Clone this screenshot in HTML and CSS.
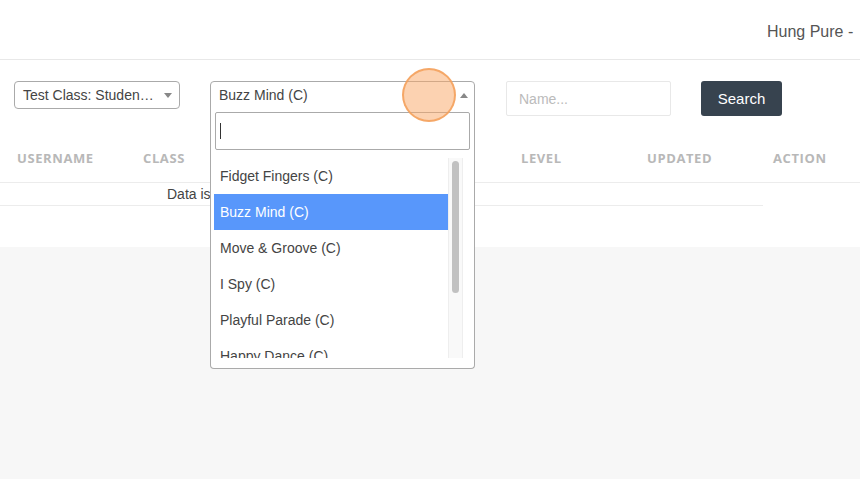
FILE: index.html
```html
<!DOCTYPE html>
<html lang="en">
<head>
  <meta charset="UTF-8" />
  <title>Students</title>
  <link rel="stylesheet" href="styles.css">
</head>
<body>
  <div class="topbar">
    <span class="user-name">Hung Pure -</span>
  </div>

  <div class="panel">
    <div class="filters">
      <div class="select">
        <span class="select-text">Test Class: Studen…</span>
        <span class="arrow-down"></span>
      </div>

      <div class="select-wrap">
        <div class="select open">
          <span class="select-text">Buzz Mind (C)</span>
          <span class="arrow-up"></span>
        </div>
        <div class="dropdown">
          <div class="dropdown-search"><span class="caret"></span></div>
          <div class="dropdown-list">
            <ul class="options">
              <li>Fidget Fingers (C)</li>
              <li class="active">Buzz Mind (C)</li>
              <li>Move &amp; Groove (C)</li>
              <li>I Spy (C)</li>
              <li>Playful Parade (C)</li>
              <li>Happy Dance (C)</li>
            </ul>
            <div class="scroll-track"><div class="scroll-thumb"></div></div>
          </div>
        </div>
        <div class="click-dot"></div>
      </div>

      <div class="name-input">Name...</div>
      <button class="search-btn">Search</button>
    </div>

    <div class="table-head">
      <div class="th">Username</div>
      <div class="th">Class</div>
      <div class="th">Game</div>
      <div class="th">Lessons</div>
      <div class="th">Level</div>
      <div class="th">Updated</div>
      <div class="th">Action</div>
    </div>
    <div class="table-row">Data is empty</div>
  </div>
</body>
</html>
```

FILE: styles.css
```css
html, body {
  margin: 0;
  padding: 0;
  height: 100%;
  background-color: #f7f7f7;
  font-family: 'Liberation Sans', Arial, sans-serif;
  color: #444;
  overflow: hidden;
}

.topbar {
  height: 59px;
  background: #fff;
  border-bottom: 1px solid #e8e8e8;
  display: flex;
  align-items: center;
  justify-content: flex-start;
  padding-left: 767px;
  white-space: nowrap;
  overflow: hidden;
}

.user-name {
  font-size: 16px;
  color: #555;
  margin-top: 4px;
}

.panel {
  background: #fff;
  height: 187px;
}

.filters {
  display: flex;
  align-items: flex-start;
  padding: 21px 0 0 14px;
}

.select {
  box-sizing: border-box;
  width: 166px;
  height: 28px;
  border: 1px solid #aaa;
  border-radius: 4px;
  display: flex;
  align-items: center;
  justify-content: space-between;
  padding: 0 8px;
  font-size: 14px;
  color: #444;
  margin-right: 30px;
  background: #fff;
}

.select-wrap {
  position: relative;
  margin-right: 31px;
}

.select-wrap .select {
  width: 265px;
  margin-right: 0;
}

.select.open {
  border-bottom-left-radius: 0;
  border-bottom-right-radius: 0;
}

.arrow-down {
  width: 0;
  height: 0;
  border-left: 4px solid transparent;
  border-right: 4px solid transparent;
  border-top: 5px solid #888;
  margin-right: -1px;
}

.arrow-up {
  width: 0;
  height: 0;
  border-left: 4px solid transparent;
  border-right: 4px solid transparent;
  border-bottom: 5px solid #888;
  margin-right: -2px;
}

/* open select2 panel */
.dropdown {
  position: absolute;
  top: 27px;
  left: 0;
  width: 265px;
  height: 261px;
  box-sizing: border-box;
  background: #fff;
  border: 1px solid #aaa;
  border-top: none;
  border-radius: 0 0 4px 4px;
  padding: 4px 4px 0 3px;
  z-index: 5;
}

.dropdown-search {
  box-sizing: border-box;
  height: 38px;
  margin-left: 1px;
  border: 1px solid #aaa;
  border-radius: 2px;
  display: flex;
  align-items: center;
  padding-left: 4px;
}

.caret {
  width: 1px;
  height: 16px;
  background: #333;
}

.dropdown-list {
  display: flex;
  margin-top: 8px;
  height: 200px;
  overflow: hidden;
}

.options {
  list-style: none;
  margin: 0;
  padding: 0;
  width: 234px;
}

.options li {
  height: 36px;
  line-height: 36px;
  padding-left: 6px;
  font-size: 14px;
  color: #444;
}

.options li.active {
  background: #5897fb;
  color: #fff;
}

.scroll-track {
  width: 15px;
  background: #f9f9f9;
  border-left: 1px solid #eee;
  border-right: 1px solid #eee;
  box-sizing: border-box;
  padding: 3px 3px 0;
}

.scroll-thumb {
  height: 132px;
  background: #c1c1c1;
  border-radius: 4px;
}

.click-dot {
  position: absolute;
  left: 192px;
  top: -13px;
  width: 50px;
  height: 50px;
  border-radius: 50%;
  background: rgba(250, 165, 100, 0.5);
  border: 2px solid rgba(243, 160, 90, 0.85);
  z-index: 6;
}

.name-input {
  box-sizing: border-box;
  width: 165px;
  height: 35px;
  border: 1px solid #e8e8e8;
  border-radius: 2px;
  padding-left: 12px;
  font-size: 14px;
  color: #bbb;
  display: flex;
  align-items: center;
  margin-right: 30px;
}

.search-btn {
  width: 81px;
  height: 35px;
  border: none;
  border-radius: 3px;
  background: #37434f;
  color: #fff;
  font-family: inherit;
  font-size: 15px;
}

.table-head {
  display: flex;
  margin-top: 17px;
  height: 49px;
  align-items: center;
  border-bottom: 1px solid #ececec;
  white-space: nowrap;
}

.th {
  flex: 0 0 126px;
  box-sizing: border-box;
  padding-left: 17px;
  font-family: 'Open Sans', sans-serif;
  font-weight: 700;
  font-size: 13px;
  letter-spacing: 0.6px;
  text-transform: uppercase;
  color: #b8b8b8;
}

.table-row {
  width: 763px;
  height: 23px;
  line-height: 23px;
  border-bottom: 1px solid #ececec;
  padding-left: 167px;
  box-sizing: border-box;
  font-size: 14px;
  color: #444;
}
```
